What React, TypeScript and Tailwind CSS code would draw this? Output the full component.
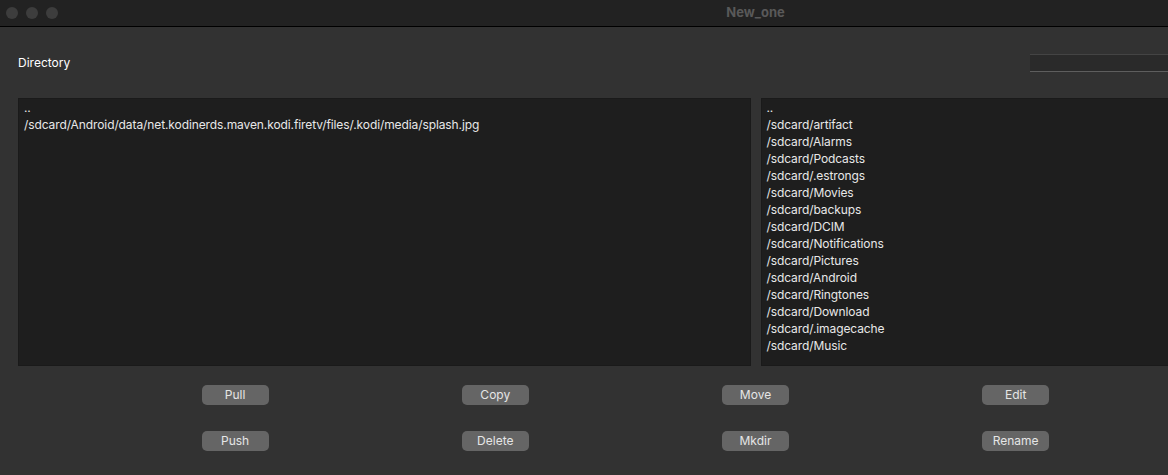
const leftItems = [
  '..',
  '/sdcard/Android/data/net.kodinerds.maven.kodi.firetv/files/.kodi/media/splash.jpg',
];

const rightItems = [
  '..',
  '/sdcard/artifact',
  '/sdcard/Alarms',
  '/sdcard/Podcasts',
  '/sdcard/.estrongs',
  '/sdcard/Movies',
  '/sdcard/backups',
  '/sdcard/DCIM',
  '/sdcard/Notifications',
  '/sdcard/Pictures',
  '/sdcard/Android',
  '/sdcard/Ringtones',
  '/sdcard/Download',
  '/sdcard/.imagecache',
  '/sdcard/Music',
];

const topButtons = ['Pull', 'Copy', 'Move', 'Edit'];
const bottomButtons = ['Push', 'Delete', 'Mkdir', 'Rename'];

function FileList({ items }: { items: string[] }) {
  return (
    <div className="flex-1 h-[268px] bg-[#1e1e1e] border border-[#1a1a1a] px-[5px] overflow-hidden">
      {items.map((item, i) => (
        <div key={i} className="h-[17px] leading-[17px] text-[12px] tracking-[-0.1px] text-[#e8e8e8] whitespace-nowrap">
          {item}
        </div>
      ))}
    </div>
  );
}

function Button({ label }: { label: string }) {
  return (
    <button className="w-[67px] h-[20px] rounded-[5px] bg-[#656565] text-[12px] leading-[20px] text-[#e6e6e6]">
      {label}
    </button>
  );
}

export default function App() {
  return (
    <div
      className="w-[1511px] h-[475px] bg-[#323232] overflow-hidden"
      style={{ fontFamily: '"Inter", "Liberation Sans", sans-serif' }}
    >
      {/* title bar */}
      <div className="relative h-[27px] bg-[#222222] border-b border-black flex items-center">
        <div className="flex gap-[8px] pl-[6px]">
          <span className="w-[12px] h-[12px] rounded-full bg-[#3d3d3d]" />
          <span className="w-[12px] h-[12px] rounded-full bg-[#3d3d3d]" />
          <span className="w-[12px] h-[12px] rounded-full bg-[#3d3d3d]" />
        </div>
        <div className="absolute inset-0 flex items-center justify-center text-[13px] font-bold text-[#595959]">
          New_one
        </div>
      </div>

      {/* directory row */}
      <div className="flex items-center h-[71px] pl-[18px] pt-[1px]">
        <span className="text-[12px] text-white">Directory</span>
        <div className="ml-[960px] w-[460px] h-[18px] bg-[#2a2a2a] border-t border-[#444444] border-b border-b-[#5e5e5e]" />
      </div>

      {/* lists */}
      <div className="flex gap-[10px] px-[18px]">
        <FileList items={leftItems} />
        <FileList items={rightItems} />
      </div>

      {/* buttons */}
      <div className="grid grid-cols-5 mx-[105px] mt-[19px] gap-y-[26px]">
        {topButtons.map((b) => (
          <div key={b} className="flex justify-center">
            <Button label={b} />
          </div>
        ))}
        <div />
        {bottomButtons.map((b) => (
          <div key={b} className="flex justify-center">
            <Button label={b} />
          </div>
        ))}
        <div />
      </div>
    </div>
  );
}
